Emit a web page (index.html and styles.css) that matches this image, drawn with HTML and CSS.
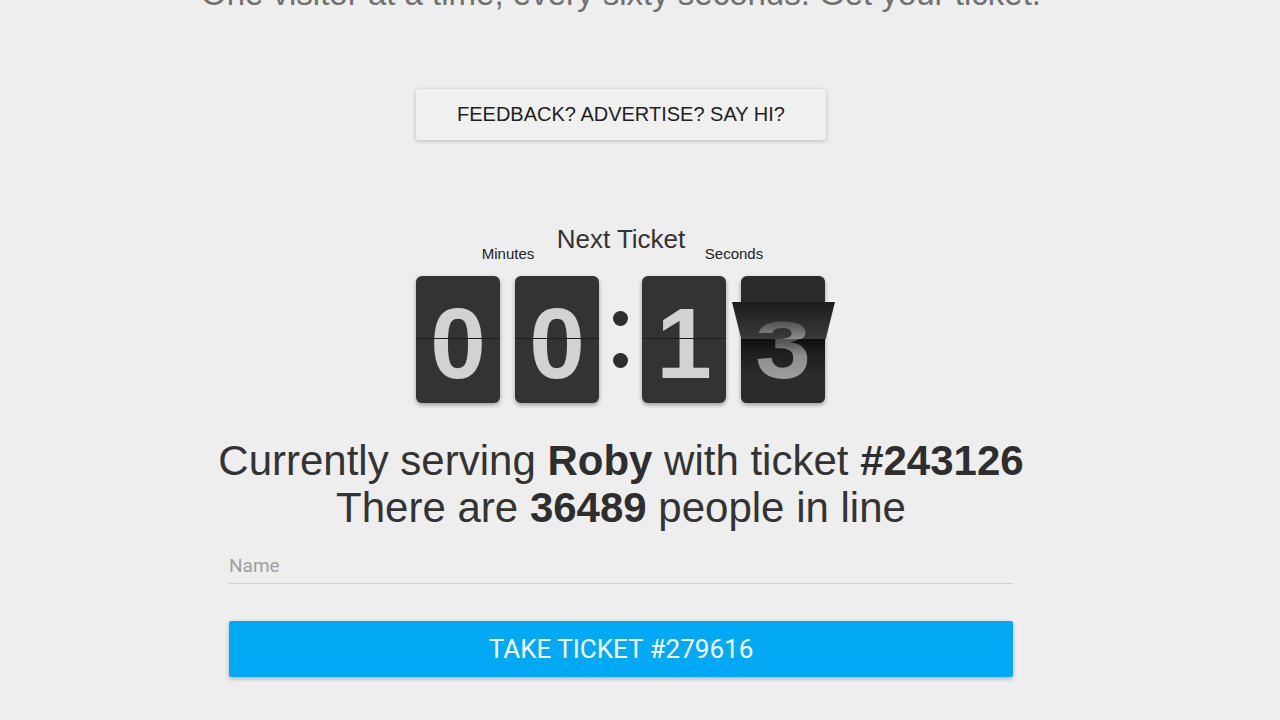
FILE: index.html
```html
<!DOCTYPE html>
<html lang="en">
<head>
<meta charset="utf-8">
<title>Next Ticket</title>
<link rel="stylesheet" href="styles.css">
</head>
<body>
<main class="page">
  <p class="tagline">One visitor at a time, every sixty seconds. Get your ticket.</p>

  <a class="feedback" href="#">FEEDBACK? ADVERTISE? SAY HI?</a>

  <section class="clock">
    <h2 class="clock-title">Next Ticket</h2>
    <div class="clock-labels">
      <span class="clock-label">Minutes</span>
      <span class="clock-label">Seconds</span>
    </div>
    <div class="clock-digits">
      <div class="pair">
        <div class="card"><span class="num">0</span></div>
        <div class="card"><span class="num">0</span></div>
      </div>
      <div class="colon"><i></i><i></i></div>
      <div class="pair">
        <div class="card"><span class="num">1</span></div>
        <div class="card card-flip">
          <div class="face face-prev"><span class="num">2</span></div>
          <div class="face face-low"><span class="num">3</span></div>
          <div class="flap">
            <div class="face face-top"><span class="num">3</span></div>
          </div>
        </div>
      </div>
    </div>
  </section>

  <p class="status">
    Currently serving <b>Roby</b> with ticket <b>#243126</b><br>
    There are <b>36489</b> people in line
  </p>

  <form class="ticket-form">
    <input class="name-input" type="text" placeholder="Name">
    <button class="take" type="button">TAKE TICKET #279616</button>
  </form>
</main>
</body>
</html>
```

FILE: styles.css
```css
html, body {
  margin: 0;
  padding: 0;
  background: #eeeeee;
  height: 100%;
  overflow: hidden;
}

body {
  font-family: "Liberation Sans", Arial, sans-serif;
  color: #333;
}

.page {
  width: 1242px;
  display: flex;
  flex-direction: column;
  align-items: center;
}

.tagline {
  margin: -25px 0 0;
  font-size: 33px;
  line-height: 38px;
  color: #707070;
  white-space: nowrap;
}

.feedback {
  margin-top: 76px;
  width: 410px;
  height: 51px;
  display: flex;
  align-items: center;
  justify-content: center;
  background: #f0f0f0;
  color: #1e1e1e;
  text-decoration: none;
  font-size: 20px;
  border-radius: 2px;
  box-shadow: 0 1px 4px rgba(0, 0, 0, 0.22);
}

/* countdown */
.clock {
  margin-top: 84px;
  width: 410px;
  display: flex;
  flex-direction: column;
  align-items: center;
}

.clock-title {
  margin: 0;
  font-weight: normal;
  font-size: 26px;
  line-height: 30px;
  color: #333;
}

.clock-labels {
  margin-top: -8px;
  width: 100%;
  display: flex;
  justify-content: space-between;
}

.clock-label {
  width: 184px;
  text-align: center;
  font-size: 15px;
  line-height: 16px;
  color: #222;
}

.clock-digits {
  margin-top: 14px;
  width: 100%;
  display: flex;
  align-items: center;
}

.pair {
  display: flex;
  gap: 15px;
}

.card {
  position: relative;
  width: 84px;
  height: 127px;
  border-radius: 6px;
  background: #333333;
  box-shadow: 0 2px 4px rgba(0, 0, 0, 0.35);
  display: flex;
  align-items: center;
  justify-content: center;
}

.card::after {
  content: "";
  position: absolute;
  left: 0;
  right: 0;
  top: 62px;
  height: 1px;
  background: #1c1c1c;
}

.num {
  font-weight: bold;
  font-size: 100px;
  line-height: 1;
  color: #d2d2d2;
  margin-top: 6px;
}

.colon {
  width: 43px;
  height: 127px;
  display: flex;
  flex-direction: column;
  align-items: center;
  justify-content: center;
  gap: 27px;
}

.colon i {
  width: 15px;
  height: 15px;
  border-radius: 50%;
  background: #2e2e2e;
}

/* digit mid-flip: old top half, new bottom half, falling flap */
.card-flip {
  background: #2a2a2a;
}

.card-flip::after {
  display: none;
}

.face {
  position: absolute;
  left: 0;
  top: 0;
  width: 84px;
  height: 127px;
  display: flex;
  align-items: center;
  justify-content: center;
  border-radius: 6px;
}

.face-prev {
  clip-path: inset(0 0 101px 0);
}

.face-prev .num {
  color: #7a7a7a;
}

.face-low {
  clip-path: inset(62px 0 0 0);
  background: linear-gradient(#2a2a2a 48%, #0e0e0e 50%, #1d1d1d 60%, #2b2b2b 80%);
}

.face-low .num {
  color: #9a9a9a;
  background: linear-gradient(#555 49%, #8c8c8c 62%, #a8a8a8);
  -webkit-background-clip: text;
  background-clip: text;
  -webkit-text-fill-color: transparent;
}

.flap {
  position: absolute;
  left: -9px;
  right: -10px;
  top: 26px;
  height: 37px;
  clip-path: polygon(0 0, 100% 0, 91% 100%, 9% 100%);
  background: linear-gradient(#1c1c1c, #2e2e2e 60%, #3a3a3a);
  overflow: hidden;
  z-index: 2;
}

.face-top {
  left: 9px;
  transform: scaleY(0.6);
  transform-origin: top;
}

.face-top .num {
  background: linear-gradient(#5a5a5a 20%, #8e8e8e 45%);
  -webkit-background-clip: text;
  background-clip: text;
  -webkit-text-fill-color: transparent;
}

/* status lines */
.status {
  margin: 34px 0 0;
  text-align: center;
  font-size: 42px;
  line-height: 47px;
  color: #333;
}

.status b {
  color: #2e2e2e;
}

.ticket-form {
  margin-top: 16px;
  width: 784px;
  display: flex;
  flex-direction: column;
}

.name-input {
  height: 36px;
  border: none;
  border-bottom: 1px solid #cfcfcf;
  background: transparent;
  padding: 0;
  font-family: Roboto, "Liberation Sans", sans-serif;
  font-size: 19px;
  color: #333;
  outline: none;
}

.name-input::placeholder {
  color: #9e9e9e;
}

.take {
  margin-top: 37px;
  height: 56px;
  border: none;
  border-radius: 2px;
  background: #03a9f4;
  color: #ffffff;
  font-family: Roboto, "Liberation Sans", sans-serif;
  font-size: 26px;
  box-shadow: 0 2px 4px rgba(0, 0, 0, 0.25);
  cursor: pointer;
}
```
